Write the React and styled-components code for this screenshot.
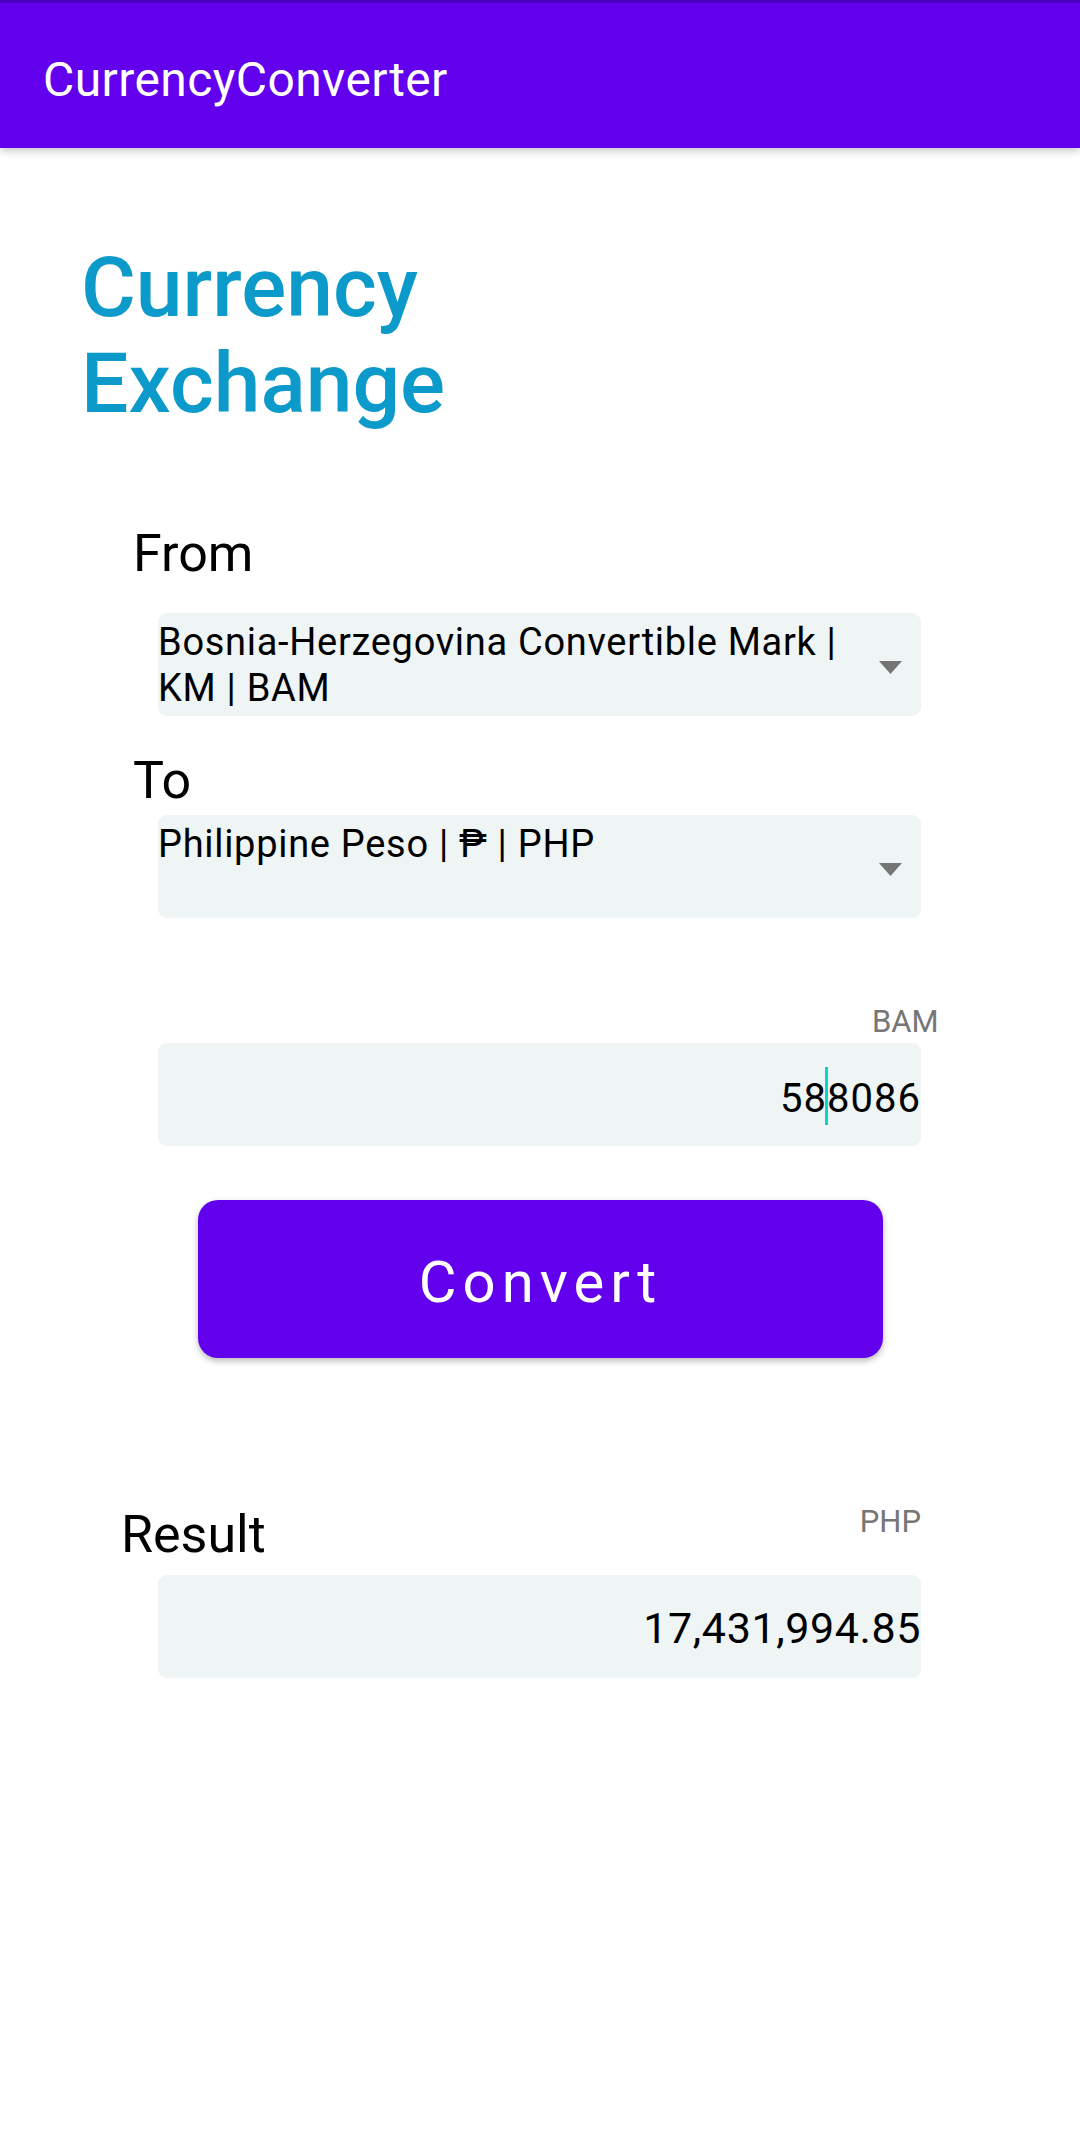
import styled, { createGlobalStyle } from "styled-components";

const GlobalStyle = createGlobalStyle`
  html, body {
    margin: 0;
    padding: 0;
    background: #fff;
  }
  body {
    font-family: Roboto, "Noto Sans", "Liberation Sans", sans-serif;
    color: #000;
  }
`;

const Screen = styled.div`
  width: 1080px;
  min-height: 2131px;
  background: #fff;
`;

const AppBar = styled.header`
  position: relative;
  display: flex;
  align-items: center;
  height: 148px;
  padding: 8px 0 0 43px;
  box-sizing: border-box;
  background: #6200ee;
  border-top: 3px solid #4b00c0;
  box-shadow: 0 3px 8px rgba(0, 0, 0, 0.22);
  color: #fff;
  font-size: 48px;
  letter-spacing: 0.4px;
  z-index: 1;
`;

const Content = styled.main`
  display: flex;
  flex-direction: column;
  padding-top: 92px;
`;

const Heading = styled.h1`
  margin: 0 0 0 81px;
  font-size: 84px;
  line-height: 96px;
  font-weight: 500;
  color: #0c9aca;
`;

const Label = styled.div`
  margin: ${(p) => p.$top}px 0 0 ${(p) => p.$left}px;
  font-size: 52px;
  line-height: 61px;
`;

const Field = styled.div`
  display: flex;
  align-items: ${(p) => (p.$alignTop ? "flex-start" : "center")};
  justify-content: space-between;
  box-sizing: border-box;
  width: 763px;
  height: 103px;
  margin: ${(p) => p.$top}px 0 0 158px;
  padding: ${(p) => (p.$alignTop ? "6px 19px 0 0" : "0")};
  background: #eff4f4;
  border-radius: 9px;
`;

const SpinnerText = styled.div`
  flex: 1;
  font-size: 38px;
  line-height: 46px;
  letter-spacing: 0.7px;
`;

const Arrow = styled.svg`
  flex: none;
  align-self: center;
  margin-left: 12px;
`;

const Unit = styled.div`
  align-self: flex-start;
  margin: ${(p) => p.$top}px 0 0 ${(p) => p.$left}px;
  font-size: 31px;
  line-height: 36px;
  color: #767676;
`;

const Value = styled.div`
  width: 100%;
  text-align: right;
  font-size: ${(p) => p.$size}px;
  line-height: ${(p) => p.$size + 7}px;
  letter-spacing: ${(p) => p.$spacing}px;
  margin-top: ${(p) => p.$shift}px;
  margin-right: -${(p) => p.$spacing}px;
`;

const Caret = styled.span`
  display: inline-block;
  width: 3px;
  height: 58px;
  margin: 0 -1px 0 -2px;
  vertical-align: -13px;
  background: #03dac5;
`;

const ConvertButton = styled.button`
  align-self: flex-start;
  width: 685px;
  height: 158px;
  margin: 54px 0 0 198px;
  border: none;
  border-radius: 20px;
  background: #6200ee;
  box-shadow: 0 3px 6px rgba(0, 0, 0, 0.28);
  color: #fff;
  font-family: inherit;
  font-size: 58px;
  letter-spacing: 6px;
  padding: 6px 0 0;
`;

const ResultRow = styled.div`
  display: flex;
  align-items: flex-start;
  justify-content: space-between;
  width: 800px;
  margin: 146px 0 0 121px;
`;

const ResultLabel = styled.div`
  font-size: 52px;
  line-height: 61px;
`;

const ResultUnit = styled.div`
  font-size: 31px;
  line-height: 36px;
  color: #767676;
`;

function DropArrow() {
  return (
    <Arrow width="23" height="13" viewBox="0 0 23 13">
      <polygon points="0,0 23,0 11.5,13" fill="#757575" />
    </Arrow>
  );
}

export default function App() {
  return (
    <Screen>
      <GlobalStyle />
      <AppBar>CurrencyConverter</AppBar>
      <Content>
        <Heading>
          Currency
          <br />
          Exchange
        </Heading>

        <Label $top={91} $left={133}>From</Label>
        <Field $top={29} $alignTop>
          <SpinnerText>
            Bosnia-Herzegovina Convertible Mark |
            <br />
            KM | BAM
          </SpinnerText>
          <DropArrow />
        </Field>

        <Label $top={34} $left={133}>To</Label>
        <Field $top={4} $alignTop>
          <SpinnerText>Philippine Peso | ₱ | PHP</SpinnerText>
          <DropArrow />
        </Field>

        <Unit $top={86} $left={872}>BAM</Unit>
        <Field $top={3}>
          <Value $size={40} $spacing={1} $shift={2}>
            58
            <Caret />
            8086
          </Value>
        </Field>

        <ConvertButton>Convert</ConvertButton>

        <ResultRow>
          <ResultLabel>Result</ResultLabel>
          <ResultUnit>PHP</ResultUnit>
        </ResultRow>
        <Field $top={10}>
          <Value $size={43} $spacing={0.6} $shift={3}>17,431,994.85</Value>
        </Field>
      </Content>
    </Screen>
  );
}
